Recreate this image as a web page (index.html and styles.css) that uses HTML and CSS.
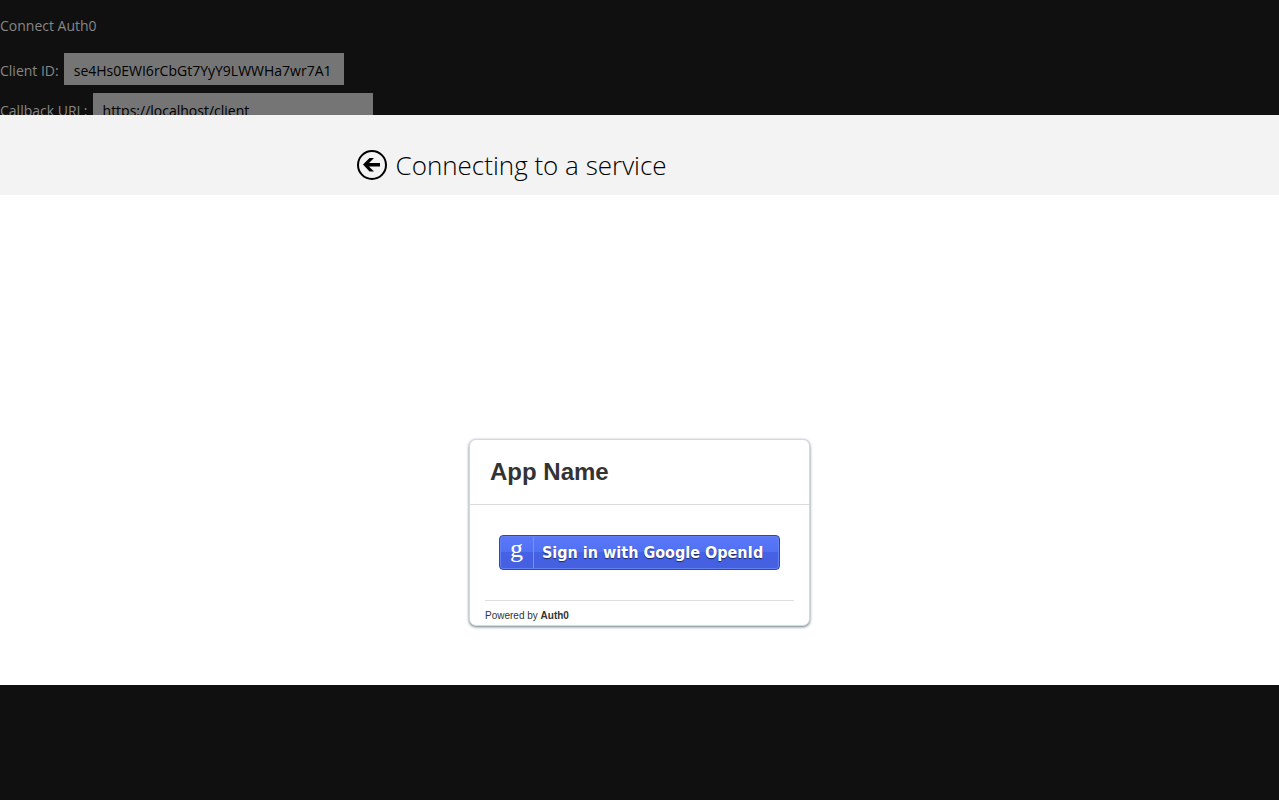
FILE: index.html
```html
<!DOCTYPE html>
<html lang="en">
<head>
<meta charset="utf-8">
<title>Connecting to a service</title>
<link rel="stylesheet" href="styles.css">
</head>
<body>
<main class="app">
  <p class="app-title">Connect Auth0</p>
  <div class="field"><label for="client">Client ID:</label><input id="client" type="text" value="se4Hs0EWI6rCbGt7YyY9LWWHa7wr7A1"></div>
  <div class="field"><label for="callback">Callback URL:</label><input id="callback" type="text" value="https://localhost/client"></div>
</main>
<div class="overlay">
  <section class="broker" role="dialog" aria-labelledby="broker-title">
    <header class="broker-header">
      <div class="broker-heading">
        <button class="back" type="button" aria-label="Back">
          <svg width="32" height="32" viewBox="0 0 32 32"><circle cx="16" cy="16" r="14" fill="none" stroke="#000" stroke-width="2"/><path d="M7 15.500L13.500 9h4.500l-5 5h11v3.500H13l5 5h-4.500z" fill="#000"/></svg>
        </button>
        <h1 class="broker-title" id="broker-title">Connecting to a service</h1>
      </div>
    </header>
    <div class="broker-body">
      <div class="card">
        <h2 class="card-title">App Name</h2>
        <div class="card-body">
          <button class="google" type="button"><span class="google-mark" aria-hidden="true">g</span><span class="google-label">Sign in with Google OpenId</span></button>
        </div>
        <footer class="card-footer">Powered by <strong>Auth0</strong></footer>
      </div>
    </div>
  </section>
</div>
</body>
</html>
```
FILE: styles.css
```css
* {
  box-sizing: border-box;
}

body {
  margin: 0;
  min-height: 100vh;
  background: #101010;
  color: #868686;
  font: 14px/20px "Open Sans", "Noto Sans", sans-serif;
}

.app {
  display: flex;
  flex-direction: column;
  gap: 8px;
  padding-top: 16px;
}

.app-title {
  margin: 0 0 9px;
}

.field {
  display: flex;
  align-items: center;
  gap: 5px;
  height: 32px;
}

.field label {
  padding-top: 4px;
}

.field input {
  width: 280px;
  height: 32px;
  padding: 5px 10px 3px;
  border: 0;
  border-radius: 0;
  background: #757575;
  color: #000;
  font: inherit;
}

.overlay {
  position: fixed;
  inset: 0;
  display: flex;
  flex-direction: column;
  justify-content: center;
}

.broker {
  display: flex;
  flex-direction: column;
  min-height: 570px;
  background: #fff;
  color: #000;
}

.broker-header {
  padding: 30px 20px 10px;
  background: #f3f3f3;
}

.broker-heading {
  display: flex;
  align-items: center;
  gap: 8px;
  max-width: 568px;
  height: 40px;
  margin: 0 auto;
}

.back {
  width: 32px;
  height: 32px;
  padding: 0;
  border: 0;
  background: none;
}

.back svg {
  display: block;
}

.broker-title {
  margin: 0;
  font-size: 26px;
  font-weight: 300;
  line-height: 40px;
}

.broker-body {
  display: flex;
  flex: 1;
  align-items: flex-end;
  justify-content: center;
  padding-bottom: 59px;
}

.card {
  width: 341px;
  border: 1px solid #d3d9dc;
  border-radius: 7px;
  background: #fff;
  box-shadow: 0 1px 3px #657b86;
  color: #333;
  font-family: "Liberation Sans", Arial, sans-serif;
}

.card-title {
  margin: 0;
  padding: 17px 20px;
  border-bottom: 1px solid #d9dcde;
  font-size: 24px;
  line-height: 30px;
}

.card-body {
  padding: 30px 29px;
}

.google {
  display: flex;
  align-items: center;
  width: 100%;
  height: 35px;
  padding: 0;
  border: 1px solid #3445a2;
  border-radius: 4px;
  background: linear-gradient(#5b78fa, #5070f2 50%, #4561e5 50%, #4560df);
  box-shadow: inset 0 0 0 1px #6580f3;
  color: #fff;
  font: bold 16px/20px "DejaVu Sans Condensed", "DejaVu Sans", sans-serif;
  text-shadow: 0 1px 1px #1a2860;
}

.google-mark {
  width: 34px;
  height: 31px;
  border-right: 1px solid #7890f8;
  font: 26px/24px "Liberation Serif", serif;
  text-shadow: none;
}

.google-label {
  padding-left: 8px;
  white-space: nowrap;
}

.card-footer {
  margin: 0 15px;
  padding: 10px 0 4px;
  border-top: 1px solid #dddfe0;
  font-size: 10px;
  line-height: 10px;
}
```
